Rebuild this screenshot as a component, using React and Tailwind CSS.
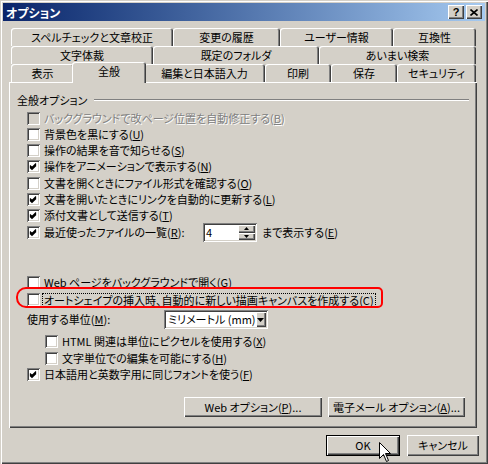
import React from "react";

const raised =
  "shadow-[inset_1px_1px_#ffffff,inset_-1px_-1px_#404040,inset_-2px_-2px_#808080]";
const sunken =
  "shadow-[inset_1px_1px_#808080,inset_-1px_-1px_#ffffff,inset_2px_2px_#404040,inset_-2px_-2px_#d4d0c8]";

// underlined access key inside parens
const K = ({ children }) => (
  <>
    (<span className="underline underline-offset-[1px]">{children}</span>)
  </>
);

const CheckBox = ({ checked, disabled }) => (
  <span
    className={`relative block w-[13px] h-[13px] shrink-0 ${
      disabled ? "bg-[#d4d0c8]" : "bg-white"
    } ${sunken}`}
  >
    {checked && (
      <svg width="13" height="13" viewBox="0 0 13 13" className="absolute left-0 top-0">
        <path
          d="M3 5.5l2 2l4-4M3 6.5l2 2l4-4M3 7.5l2 2l4-4"
          stroke="#000"
          strokeWidth="1.1"
          fill="none"
        />
      </svg>
    )}
  </span>
);

const Row = ({ checked, disabled, className = "", children }) => (
  <div className={`flex items-center h-[13px] ${className}`}>
    <CheckBox checked={checked} disabled={disabled} />
    <span
      className={`ml-[4px] whitespace-nowrap ${
        disabled ? "text-[#808080] [text-shadow:1px_1px_#ffffff]" : ""
      }`}
    >
      {children}
    </span>
  </div>
);

const Tab = ({ className, children }) => (
  <div
    className={`flex items-center justify-center h-[18px] rounded-t-[3px] whitespace-nowrap shadow-[inset_1px_1px_#ffffff,inset_-1px_0_#404040,inset_-2px_0_#808080] ${className}`}
  >
    {children}
  </div>
);

const Button = ({ className = "", children }) => (
  <button className={`flex items-center justify-center bg-[#d4d0c8] font-normal whitespace-nowrap ${raised} ${className}`}>
    {children}
  </button>
);

const App = () => {
  return (
    <div className="w-[488px] h-[464px] bg-[#d4d0c8] text-black text-[11px] leading-[13px] font-['Noto_Sans_CJK_JP',sans-serif] [font-feature-settings:'palt'] shadow-[inset_1px_1px_#d4d0c8,inset_2px_2px_#ffffff,inset_-1px_-1px_#404040,inset_-2px_-2px_#808080] pt-[3px] relative overflow-hidden">
      {/* title bar */}
      <div className="mx-[3px] h-[18px] flex items-center bg-linear-to-r from-[#0a246a] to-[#a6caf0] pl-[3px] pr-[3px]">
        <span className="text-white font-bold text-[12px]">オプション</span>
        <div className="ml-auto flex gap-[2px]">
          <div className={`w-[16px] h-[14px] bg-[#d4d0c8] flex items-center justify-center font-bold text-[11px] leading-none font-['Liberation_Sans',sans-serif] ${raised}`}>
            ?
          </div>
          <div className={`w-[16px] h-[14px] bg-[#d4d0c8] flex items-center justify-center ${raised}`}>
            <svg width="8" height="7" viewBox="0 0 8 7">
              <path d="M0.5 0.5l7 6M7.5 0.5l-7 6" stroke="#000" strokeWidth="1.6" />
            </svg>
          </div>
        </div>
      </div>

      {/* tabs + panel */}
      <div className="px-[9px] mt-[7px]">
        <div className="ml-[2px] w-[465px]">
          <div className="flex">
            <Tab className="w-[162px]">スペルチェックと文章校正</Tab>
            <Tab className="w-[107px]">変更の履歴</Tab>
            <Tab className="w-[113px]">ユーザー情報</Tab>
            <Tab className="w-[83px]">互換性</Tab>
          </div>
          <div className="flex">
            <Tab className="w-[142px]">文字体裁</Tab>
            <Tab className="w-[166px]">既定のフォルダ</Tab>
            <Tab className="w-[157px]">あいまい検索</Tab>
          </div>
          <div className="flex items-end h-[18px]">
            <Tab className="w-[63px]">表示</Tab>
            <Tab className="w-[74px] !h-[21px] -mx-[2px] -mb-[1px] relative z-10 bg-[#d4d0c8] pb-[2px]">
              全般
            </Tab>
            <Tab className="w-[121px]">編集と日本語入力</Tab>
            <Tab className="w-[66px]">印刷</Tab>
            <Tab className="w-[66px]">保存</Tab>
            <Tab className="w-[79px]">セキュリティ</Tab>
          </div>
        </div>

        <div className={`relative w-[468px] h-[346px] flex flex-col ${raised}`}>
          {/* group header */}
          <div className="flex items-center h-[12px] mt-[12px] mx-[8px]">
            <span className="whitespace-nowrap">全般オプション</span>
            <div className="ml-[7px] flex-1 h-[2px] border-t border-t-[#808080] border-b border-b-white" />
          </div>

          <div className="ml-[18px] flex flex-col">
            <Row disabled className="mt-[6px]">
              バックグラウンドで改ページ位置を自動修正する<K>B</K>
            </Row>
            <Row className="mt-[3px]">
              背景色を黒にする<K>U</K>
            </Row>
            <Row className="mt-[3px]">
              操作の結果を音で知らせる<K>S</K>
            </Row>
            <Row checked className="mt-[3px]">
              操作をアニメーションで表示する<K>N</K>
            </Row>
            <Row className="mt-[4px]">
              文書を開くときにファイル形式を確認する<K>O</K>
            </Row>
            <Row checked className="mt-[3px]">
              文書を開いたときにリンクを自動的に更新する<K>L</K>
            </Row>
            <Row checked className="mt-[3px]">
              添付文書として送信する<K>T</K>
            </Row>

            {/* recent files */}
            <div className="flex items-center h-[13px] mt-[4px]">
              <CheckBox checked />
              <span className="ml-[4px] w-[159px] whitespace-nowrap">
                最近使ったファイルの一覧<K>R</K>:
              </span>
              <div className={`flex items-center shrink-0 w-[54px] h-[19px] bg-white ${sunken} pl-[3px] pr-[2px]`}>
                <span className="flex-1">4</span>
                <div className="flex flex-col w-[17px] h-[15px]">
                  <div className={`flex-1 flex items-center justify-center bg-[#d4d0c8] ${raised}`}>
                    <svg width="5" height="3" viewBox="0 0 5 3"><path d="M2.5 0L5 3H0z" fill="#000" /></svg>
                  </div>
                  <div className={`flex-1 flex items-center justify-center bg-[#d4d0c8] ${raised}`}>
                    <svg width="5" height="3" viewBox="0 0 5 3"><path d="M0 0h5L2.5 3z" fill="#000" /></svg>
                  </div>
                </div>
              </div>
              <span className="ml-[5px] whitespace-nowrap">
                まで表示する<K>E</K>
              </span>
            </div>

            <Row className="mt-[37px]">
              Web ページをバックグラウンドで開く<K>G</K>
            </Row>

            <div className="flex items-center h-[13px] mt-[4px]">
              <CheckBox />
              <span className="ml-[2px] px-[1px] border border-dotted border-black h-[14px] leading-[12px] whitespace-nowrap">
                オートシェイプの挿入時、自動的に新しい描画キャンバスを作成する<K>C</K>
              </span>
            </div>

            {/* units */}
            <div className="flex items-center h-[19px] mt-[4px]">
              <span className="w-[137px] whitespace-nowrap">
                使用する単位<K>M</K>:
              </span>
              <div className={`flex items-center w-[104px] h-[19px] bg-white ${sunken} pl-[4px] pr-[2px]`}>
                <span className="flex-1 whitespace-nowrap">ミリメートル (mm)</span>
                <div className={`w-[16px] h-[15px] flex items-center justify-center bg-[#d4d0c8] ${raised}`}>
                  <svg width="7" height="4" viewBox="0 0 7 4"><path d="M0 0h7L3.5 4z" fill="#000" /></svg>
                </div>
              </div>
            </div>

            <Row className="mt-[6px] ml-[18px]">
              HTML 関連は単位にピクセルを使用する<K>X</K>
            </Row>
            <Row className="mt-[4px] ml-[18px]">
              文字単位での編集を可能にする<K>H</K>
            </Row>
            <Row checked className="mt-[3px]">
              日本語用と英数字用に同じフォントを使う<K>F</K>
            </Row>
          </div>

          <div className="flex justify-end gap-[6px] mt-[16px] pr-[12px]">
            <Button className="w-[138px] h-[20px]">
              Web オプション<K>P</K>...
            </Button>
            <Button className="w-[137px] h-[20px]">
              電子メール オプション<K>A</K>...
            </Button>
          </div>

          {/* red annotation */}
          <div className="absolute left-[7px] top-[205px] w-[367px] h-[21px] border-2 border-[#ff0000] rounded-l-[10px] rounded-r-[5px] pointer-events-none" />
        </div>

        {/* bottom buttons */}
        <div className="flex justify-end gap-[7px] mt-[7px]">
          <div className="relative">
            <Button className="w-[74px] h-[21px] outline outline-1 outline-black -outline-offset-1 shadow-[inset_2px_2px_#ffffff,inset_-2px_-2px_#404040,inset_-3px_-3px_#808080]">
              OK
            </Button>
            {/* mouse cursor */}
            <svg
              width="13"
              height="21"
              viewBox="0 0 13 21"
              className="absolute left-[53px] top-[7px] z-20"
            >
              <path
                d="M0.5 0.5V16.5L4.5 12.5L7.5 19.5L9.5 18.5L6.5 11.5H11.5Z"
                fill="#fff"
                stroke="#000"
                strokeWidth="1"
              />
            </svg>
          </div>
          <Button className="w-[72px] h-[21px]">キャンセル</Button>
        </div>
      </div>
    </div>
  );
};

export default App;
